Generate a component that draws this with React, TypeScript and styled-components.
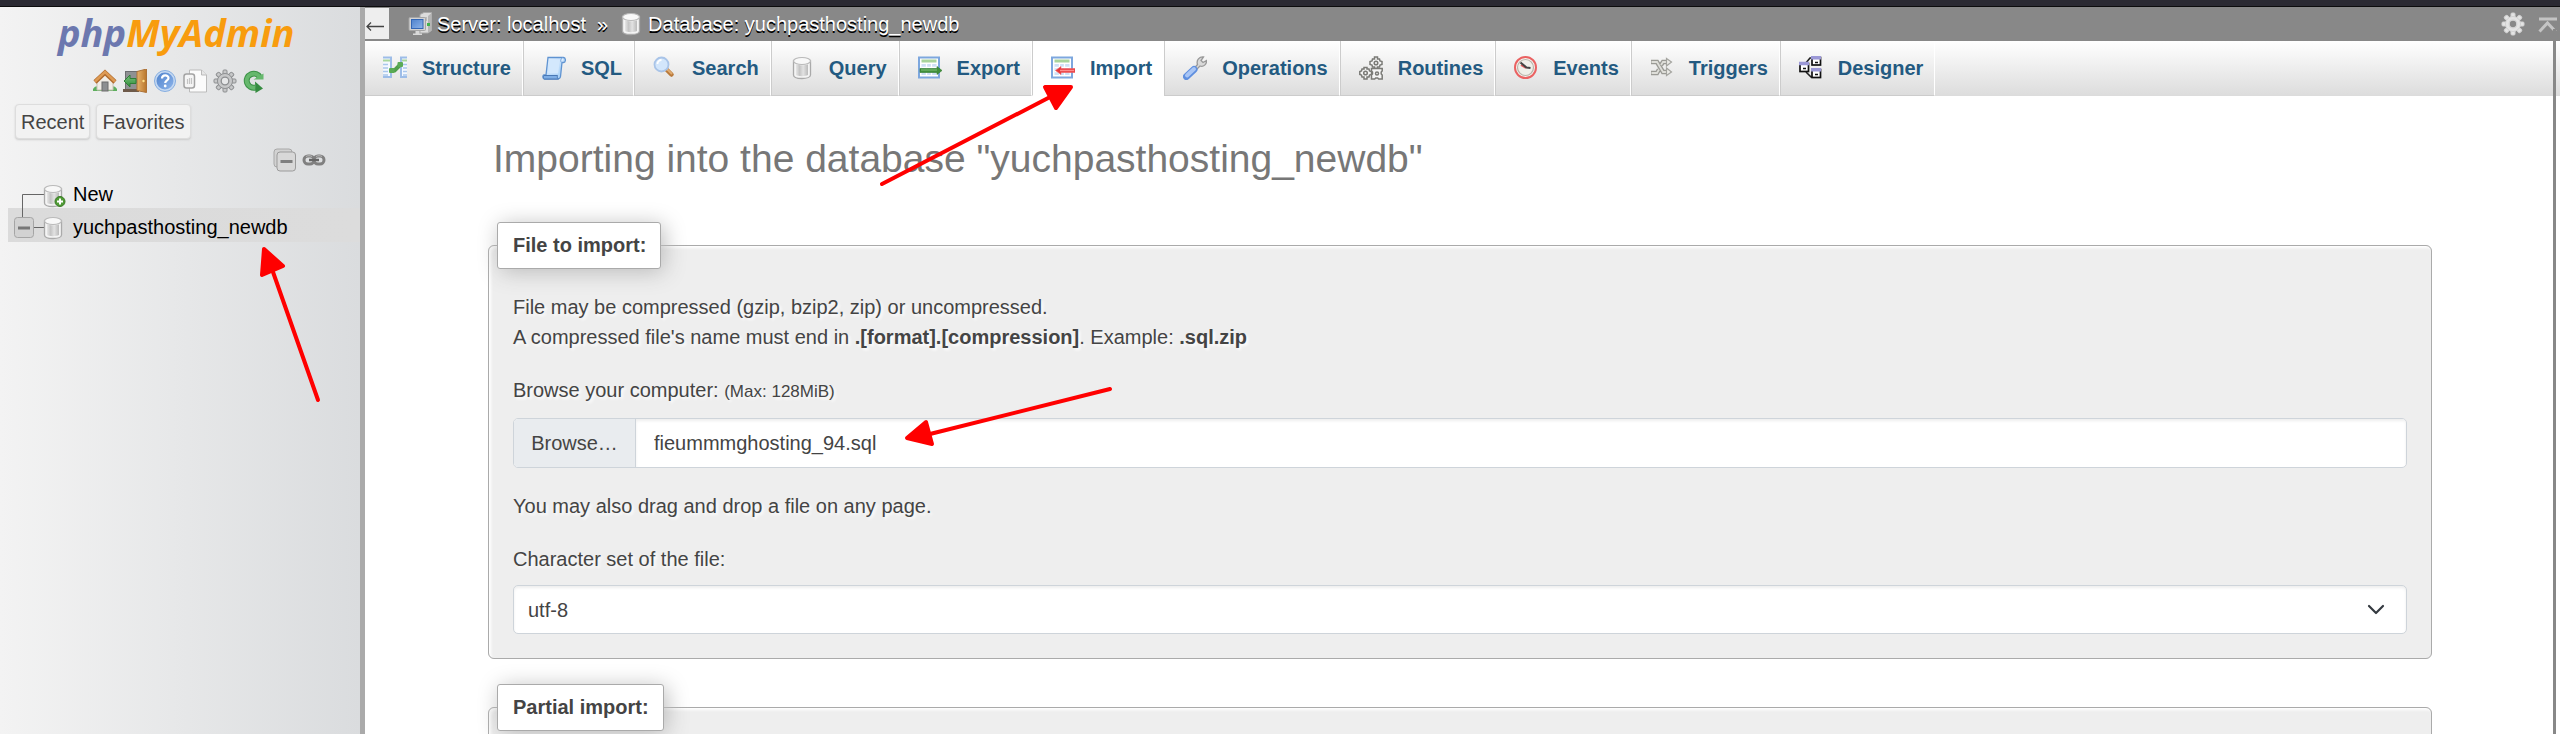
import React, { useRef, useState } from "react";
import styled, { createGlobalStyle } from "styled-components";

const GlobalStyle = createGlobalStyle`
  *, *::before, *::after { box-sizing: border-box; }
  body {
    margin: 0;
    background: #fff;
    color: #444;
    font-family: "Liberation Sans", Arial, sans-serif;
    font-size: 20px;
    line-height: 30px;
  }
  a { text-decoration: none; }
`;

const Page = styled.div`
  position: relative;
  display: flex;
  flex-direction: column;
  height: 100vh;
  overflow: hidden;
`;

const WindowEdge = styled.div`
  flex: none;
  height: 7px;
  background: #2b2a33;
  border-bottom: 1px solid #0c0c0d;
`;

const Columns = styled.div`
  display: flex;
  flex: 1;
  min-height: 0;
`;

/* ---------- navigation panel ---------- */

const Sidebar = styled.nav`
  flex: none;
  width: 365px;
  border-right: 5px solid #aaa;
  background: linear-gradient(to right, #f3f3f3, #dadcde);
`;

const Logo = styled.a`
  display: block;
  height: 62px;
  padding: 1px 0 0 58px;
  font: italic 700 38px/48px "Open Sans", sans-serif;
  color: #6c78af;
`;

const LogoAccent = styled.span`
  color: #f89c0e;
`;

const IconRow = styled.div`
  display: flex;
  gap: 6px;
  height: 24px;
  padding-left: 93px;
`;

const IconLink = styled.a`
  display: block;
  width: 24px;
  height: 24px;
`;

const Svg = styled.svg`
  display: block;
  flex: none;
  width: 24px;
  height: 24px;
`;

const QuickButtons = styled.div`
  display: flex;
  gap: 6px;
  padding: 11px 15px 0;
`;

const QuickButton = styled.button`
  height: 35px;
  padding: 0 5px;
  border: 1px solid #ddd;
  border-radius: 4px;
  background: #f2f2f2;
  box-shadow: 0 1px 2px #ccc;
  color: #444;
  font: inherit;
  line-height: 32px;
`;

const TreeTools = styled.div`
  display: flex;
  gap: 5px;
  height: 36px;
  margin-top: 9px;
  padding-left: 273px;
`;

const Tree = styled.ul`
  margin: 0;
  padding: 0 0 0 8px;
  list-style: none;
`;

const TreeItem = styled.li<{ $selected?: boolean }>`
  display: flex;
  height: ${(p) => (p.$selected ? 34 : 24)}px;
  background: ${(p) => (p.$selected ? "linear-gradient(to right, #dbdbdb, #dcdcdc)" : "none")};
`;

const TreeSvg = styled.svg`
  display: block;
  flex: none;
  width: 65px;
  height: 34px;
`;

const TreeLink = styled.a<{ $first?: boolean }>`
  color: #000;
  line-height: ${(p) => (p.$first ? 20 : 38)}px;
`;

/* ---------- top bar and tabs ---------- */

const Main = styled.main`
  flex: 1;
  min-width: 0;
  background: #fff;
`;

const TopBar = styled.header`
  display: flex;
  align-items: center;
  height: 34px;
  padding-right: 1px;
  background: #888;
`;

const BackButton = styled.button`
  width: 24px;
  height: 31px;
  margin: 0 19px 2px 0;
  padding: 0;
  border: 0;
  background: #eee;
`;

const Crumb = styled.a`
  display: flex;
  align-items: center;
  gap: 5px;
  color: #fff;
  text-shadow: 0 2px 0 #000;
`;

const CrumbDivider = styled.span`
  margin: 0 11px;
  color: #fff;
  text-shadow: 0 2px 0 #000;
`;

const BarTools = styled.div`
  display: flex;
  gap: 10px;
  margin-left: auto;
`;

const TabBar = styled.ul`
  display: flex;
  height: 55px;
  margin: 0;
  padding: 0;
  list-style: none;
  background: linear-gradient(#fff, #dcdcdc);
`;

const Tab = styled.li<{ $active?: boolean; $first?: boolean }>`
  display: flex;
  border-left: ${(p) => (p.$first ? 0 : 1)}px solid #ccc;
  border-right: 1px solid #fff;
  border-bottom: 1px solid ${(p) => (p.$active ? "#fff" : "#ccc")};
  background: ${(p) => (p.$active ? "#fff" : "none")};
`;

const TabLink = styled.a`
  display: flex;
  align-items: center;
  gap: 15px;
  padding: 0 11px 0 18px;
  color: #235a81;
  font-weight: bold;
`;

/* ---------- import form ---------- */

const Content = styled.div`
  padding: 39px 128px 0 123px;
`;

const Title = styled.h2`
  margin: 0 0 39px 5px;
  color: #777;
  font-size: 39px;
  font-weight: normal;
  line-height: 48px;
`;

const FieldSet = styled.fieldset`
  min-width: 0;
  margin: 0 0 25px;
  padding: 23px 24px 24px;
  border: 1px solid #aaa;
  border-radius: 6px;
  background: #eee;
  box-shadow: inset 2px 2px 3px #fff;
  text-shadow: 2px 2px 3px #fff;
`;

const Legend = styled.legend`
  margin-left: -16px;
  padding: 7px 14px 8px 15px;
  border: 1px solid #aaa;
  border-radius: 3px;
  background: #fff;
  box-shadow: 3px 3px 22px #bbb;
  color: #444;
  font-weight: bold;
`;

const Hint = styled.p`
  margin: 0 0 23px;
`;

const FieldLabel = styled.label`
  display: block;
  margin-bottom: 11px;
`;

const Limit = styled.small`
  font-size: 17px;
`;

const FilePicker = styled.div`
  display: flex;
  height: 50px;
  margin-bottom: 23px;
  overflow: hidden;
  border: 1px solid #ced4da;
  border-radius: 5px;
  background: #fff;
`;

const BrowseButton = styled.button`
  flex: none;
  width: 122px;
  padding: 0;
  border: 0;
  border-right: 1px solid #ced4da;
  background: #e9ecef;
  color: #444;
  font: inherit;
`;

const FileName = styled.input`
  flex: 1;
  min-width: 0;
  padding: 0 18px;
  border: 0;
  outline: 0;
  background: transparent;
  box-shadow: inset 0 2px 3px #eee;
  color: #444;
  font: inherit;
`;

const SelectBox = styled.div`
  position: relative;
`;

const Select = styled.select`
  display: block;
  width: 100%;
  height: 49px;
  padding: 0 14px;
  appearance: none;
  border: 1px solid #ced4da;
  border-radius: 5px;
  background: #fff;
  box-shadow: inset 0 2px 3px #eee;
  color: #444;
  font: inherit;
`;

const Chevron = styled.svg`
  position: absolute;
  top: 16px;
  right: 22px;
  width: 18px;
  height: 18px;
  pointer-events: none;
`;

/* ---------- things lying over the page ---------- */

const PageRule = styled.div`
  position: absolute;
  top: 29px;
  right: 4px;
  bottom: 0;
  width: 3px;
  background: #888;
`;

const Arrows = styled.svg`
  position: absolute;
  top: 0;
  left: 0;
  width: 1200px;
  height: 500px;
  pointer-events: none;
`;

/* ---------- icons ---------- */

const HiddenSvg = styled.svg`
  position: absolute;
  width: 0;
  height: 0;
`;

const Gradients = () => (
  <HiddenSvg aria-hidden="true">
    <defs>
      <linearGradient id="silver" x1="0" x2="1" y1="0" y2="0">
        <stop offset="0" stopColor="#e6e6e6" />
        <stop offset="0.3" stopColor="#c4c4c4" />
        <stop offset="0.6" stopColor="#e2e2e2" />
        <stop offset="1" stopColor="#bababa" />
      </linearGradient>
      <linearGradient id="sky" x1="0" x2="1" y1="0" y2="1">
        <stop offset="0" stopColor="#e8f3ff" />
        <stop offset="1" stopColor="#9ecbf6" />
      </linearGradient>
      <linearGradient id="wood" x1="0" x2="1" y1="0" y2="0">
        <stop offset="0" stopColor="#e8b36a" />
        <stop offset="1" stopColor="#b8752c" />
      </linearGradient>
      <linearGradient id="leaf" x1="0" x2="0" y1="0" y2="1">
        <stop offset="0" stopColor="#7cc47e" />
        <stop offset="1" stopColor="#2e8b3a" />
      </linearGradient>
      <linearGradient id="screen" x1="0" x2="1" y1="0" y2="1">
        <stop offset="0" stopColor="#4f82cc" />
        <stop offset="1" stopColor="#8db4ea" />
      </linearGradient>
    </defs>
  </HiddenSvg>
);

const Cylinder = () => (
  <g>
    <path d="M3.500 5v14c0 2 3.500 3.500 8.500 3.500s8.500-1.500 8.500-3.500V5z" fill="#f4f4f4" stroke="#aaa" strokeWidth="1.300" />
    <path d="M6 8.500v10.500c2 1.500 9.500 1.500 12 0V8.500c-3 1-9 1-12 0z" fill="url(#silver)" />
    <ellipse cx="12" cy="5" rx="8.500" ry="3.500" fill="#f8f8f8" stroke="#b9b9b9" strokeWidth="1.200" />
  </g>
);

const gearTeeth = [0, 45, 90, 135, 180, 225, 270, 315];

const Gear = ({ fill, edge, hole }: { fill: string; edge: string; hole: string }) => (
  <g>
    {gearTeeth.map((a) => (
      <rect key={a} x="10" y="1" width="4" height="6" rx="1" fill={fill} stroke={edge} transform={`rotate(${a} 12 12)`} />
    ))}
    <circle cx="12" cy="12" r="7.500" fill={fill} stroke={edge} />
    <circle cx="12" cy="12" r="6.500" fill={fill} />
    <circle cx="12" cy="12" r="3.800" fill={hole} stroke={edge} strokeWidth="1.300" />
  </g>
);

const SheetIcon = () => (
  <g>
    <rect x="1" y="1.500" width="20" height="20" fill="#fff" stroke="#7da7de" strokeWidth="2" />
    <rect x="3.500" y="3.500" width="15" height="3" fill="#a9d49b" />
    <rect x="3.500" y="8" width="15" height="11" fill="#cfe0f5" />
    <path d="M3.500 11.500h15M3.500 15.500h15M8.500 8v11M13.500 8v11" stroke="#fff" strokeWidth="1.300" />
  </g>
);

const icons: Record<string, React.ReactNode> = {
  home: (
    <>
      <path d="M0 20c3-4 6-3 7 0h10c1-3 4-4 7 0v2H0z" fill="#5daf5e" />
      <path d="M4 12l8-7 8 7v9H4z" fill="#f1ede6" stroke="#c9c2b6" />
      <rect x="9" y="13" width="6" height="9" fill="#8d8f91" stroke="#6d6d6d" />
      <path d="M2 13L12 3.500 22 13" fill="none" stroke="#b06a2c" strokeWidth="4.500" />
      <path d="M2 12.500L12 3l10 9.500" fill="none" stroke="#dd9a53" strokeWidth="2.500" />
    </>
  ),
  exit: (
    <>
      <rect x="2.500" y="2.500" width="14" height="19" fill="#8f9193" stroke="#6c6e70" />
      <path d="M0 20h16v3H0z" fill="#6e5a4a" />
      <path d="M14 2.500L23.500 0v23.500L14 21.500z" fill="url(#wood)" stroke="#ad7136" />
      <circle cx="20.500" cy="12" r="1.200" fill="#ffe18a" />
      <path d="M1 12l6-6v3.500h6v5H7V18z" fill="url(#leaf)" stroke="#2f7f37" />
    </>
  ),
  help: (
    <>
      <circle cx="12" cy="12" r="10.500" fill="#c5d9f2" stroke="#86aee0" />
      <circle cx="12" cy="12" r="8.500" fill="url(#screen)" />
      <path d="M9 9.500c0-4 6.500-4 6.500-.500 0 2.500-3.300 2.200-3.300 5" fill="none" stroke="#fff" strokeWidth="2.200" />
      <circle cx="12.200" cy="17" r="1.400" fill="#fff" />
    </>
  ),
  docs: (
    <>
      <path d="M6.500 1h12l5 5v17h-17z" fill="#fbfbfb" stroke="#bbb" />
      <path d="M18.500 1v5h5" fill="#e6e6e6" stroke="#bbb" />
      <rect x="1" y="5" width="10.500" height="14" rx="2.500" fill="#f5f5f5" stroke="#a3a3a3" strokeWidth="1.500" />
      <path d="M4.500 10v5M6.500 9v6M8.500 9v6" stroke="#c4c4c4" strokeWidth="1.200" />
    </>
  ),
  gear: <Gear fill="#c6c7c8" edge="#8d8f91" hole="#e6e7e8" />,
  whiteGear: <Gear fill="#e4e4e4" edge="#d2d2d2" hole="#888" />,
  reload: (
    <>
      <path d="M17 8.500A7 7 0 1 0 12.500 18.500" fill="none" stroke="#3d9348" strokeWidth="6" />
      <path d="M17 8.500A7 7 0 1 0 12.500 18.500" fill="none" stroke="#66b86d" strokeWidth="4" />
      <path d="M10.500 10.500h10v-6z" fill="#66b86d" />
      <path d="M12 12.500l8 7-7.500 4.500z" fill="#358c40" />
    </>
  ),
  stack: (
    <>
      <rect x="1" y="1" width="18" height="18" rx="3" fill="#d2d2d2" stroke="#a8a8a8" />
      <rect x="4" y="4" width="18.500" height="19" rx="3" fill="#d8d8d8" stroke="#9b9b9b" />
      <rect x="7.500" y="12" width="12" height="3" fill="#7f7f7f" />
    </>
  ),
  link: (
    <>
      <rect x="2" y="8" width="10" height="8" rx="4" fill="none" stroke="#808080" strokeWidth="3" />
      <rect x="12" y="8" width="10" height="8" rx="4" fill="none" stroke="#808080" strokeWidth="3" />
      <path d="M7 12h10" stroke="#666" strokeWidth="2.500" />
      <path d="M4 8.500c1-1 5-1 6 0M14 8.500c1-1 5-1 6 0" fill="none" stroke="#bbb" />
    </>
  ),
  server: (
    <>
      <path d="M12 2.500L16 .500h7.500v18L20 21h-8z" fill="#dcdcdc" stroke="#a8a8a8" />
      <path d="M20 4l3.500-3v17.500L20 21z" fill="#b5b5b5" />
      <path d="M14 6h5M14 8h5" stroke="#999" />
      <rect x="19" y="11" width="3" height="3" fill="#3fb24c" />
      <rect x="1" y="5.500" width="16.500" height="13" rx="1" fill="#d2d2d2" stroke="#a5a5a5" />
      <rect x="3.500" y="7.500" width="11.500" height="9" fill="url(#screen)" stroke="#3467b5" />
      <path d="M7.500 19h4v2.500H14V23H5v-1.500h2.500z" fill="#d9d9d9" />
    </>
  ),
  database: <Cylinder />,
  structure: (
    <>
      <path d="M0 1.500h8V21H0" fill="#f4f8fe" stroke="#9dbde8" strokeWidth="2" />
      <path d="M24 1.500h-6V21h6" fill="#f4f8fe" stroke="#9dbde8" strokeWidth="2" />
      <path d="M0 4.500h7M19 4.500h5" stroke="#a7d69c" strokeWidth="2" />
      <path d="M0 8.500h5M0 12h5M0 15.500h5M0 19h5M20 8.500h4M20 12h4M20 15.500h4M20 19h4" stroke="#a9c6ec" strokeWidth="1.500" />
      <path d="M8 14.500h3.500l5.500-5.500h1" fill="none" stroke="#519f4c" strokeWidth="4" strokeLinejoin="round" />
      <rect x="6" y="12" width="5.500" height="5" rx="1" fill="#5aab55" />
      <rect x="14.500" y="6" width="5.500" height="5" rx="1" fill="#5aab55" />
    </>
  ),
  sql: (
    <>
      <path d="M6 1.500h15.500c2.500 0 2.500 5 0 5H20l-1.500 14c-.300 2-1.200 2.500-3 2.500H2.500C.500 23 .500 19 2 19h2z" fill="url(#sky)" stroke="#5f93d1" strokeWidth="1.300" />
      <path d="M20 6.500c-1.800-.500-1.500-4 1-5" fill="#f3f9ff" stroke="#6b9edb" />
      <path d="M2 19.500h13.500c-.500 1.800 0 3 1 3.500H2.500c-1.300-.500-1.500-2.500-.500-3.500z" fill="#7eaee6" stroke="#4a78b5" />
      <path d="M7.500 3.500h10.500l-1.800 14H5.800z" fill="#d3e8fd" />
    </>
  ),
  search: (
    <>
      <path d="M14 14l4.500 4.500" stroke="#b97a3c" strokeWidth="4.500" strokeLinecap="round" />
      <path d="M14.500 13.500l4 4" stroke="#e0ab70" strokeWidth="2" strokeLinecap="round" />
      <circle cx="8.500" cy="8.500" r="7" fill="#d3e6fb" stroke="#a9c4e8" strokeWidth="1.800" />
      <path d="M4.500 8c0-2.500 2-4 4-4" fill="none" stroke="#fff" strokeWidth="1.800" />
    </>
  ),
  query: <Cylinder />,
  export: (
    <>
      <SheetIcon />
      <path d="M2 12.500h17V10.500l5 4-5 4v-2H2z" fill="#3f8f3b" stroke="#2f7a2e" strokeWidth=".600" />
      <path d="M3 14h16" stroke="#83c27b" />
    </>
  ),
  import: (
    <>
      <SheetIcon />
      <path d="M24 12.500H10V10.500l-5.500 4 5.500 4v-2H24z" fill="#e8393c" stroke="#f16264" strokeWidth=".600" />
      <path d="M9 14.500h14" stroke="#ff8d8d" strokeWidth="1.500" />
    </>
  ),
  operations: (
    <>
      <path d="M11 12.500l3.500-4C13 4 16.500 .500 20.500 1L18 4.500l2 2L23.500 4.500C24 8 20.500 11.500 17 10l-4.500 4.500z" fill="#d9d9d9" stroke="#999" strokeWidth="1.300" />
      <path d="M3.500 20.500l7.500-7" stroke="#5f8fdf" strokeWidth="7" strokeLinecap="round" />
      <path d="M4 19.500l7-6.500" stroke="#a8c5f5" strokeWidth="4" strokeLinecap="round" />
    </>
  ),
  routines: (
    <g fill="#f4f4f4" stroke="#7a7a76" strokeWidth="1.500">
      <path d="M15.500 1h3v2h2l.500 2 2 .500v3l-2 .500-.500 2h-2v1.500h-3V11h-2l-.500-2-2-.500v-3l2-.500.500-2h2z" />
      <path d="M5 11.500h3V13h2l.500 2 2 .500v3l-2 .500-.500 2H8v2H5v-2H3l-.500-2L.800 18.500v-3l1.700-.500.500-2h2z" />
      <path d="M12.500 12.500h10.700v2.500l-1 1v2l1 1v4h-3.500l-1-1h-2l-1 1h-3.200v-4l1-1v-2l-1-1z" />
      <circle cx="17" cy="7" r="1.800" />
      <circle cx="6.500" cy="17" r="1.800" />
      <circle cx="18" cy="17.500" r="1.500" />
    </g>
  ),
  events: (
    <>
      <circle cx="11.500" cy="11.500" r="10.500" fill="#f4f4f0" stroke="#ea6262" strokeWidth="2" />
      <circle cx="11.500" cy="11.500" r="8" fill="#efefe9" stroke="#b9b3a9" strokeWidth="1.200" />
      <path d="M7 9l5 3" stroke="#e05a5a" strokeWidth="2" />
      <path d="M6.500 6.500l6 5 4 .500" fill="none" stroke="#444" strokeWidth="2" />
    </>
  ),
  triggers: (
    <>
      <path d="M1 6h6l6 10h5M1 17h6l2-3.500M11 9l2-3h5" fill="none" stroke="#9a9a95" strokeWidth="4.500" />
      <path d="M1.500 6h5.500l6 10h5M1.500 17h5.500l2-3.500M11 9l2-3h5" fill="none" stroke="#deded9" strokeWidth="1.800" />
      <path d="M16.500 2.500l5 3.500-5 4zM16.500 12l5 4-5 3.500z" fill="#ecece8" stroke="#a4a49f" strokeWidth="1.200" />
    </>
  ),
  designer: (
    <>
      <path d="M6 8l5-6h3M7 16l5 5h2" fill="none" stroke="#222" strokeWidth="1.600" />
      <g fill="#fff" stroke="#111" strokeWidth="1.700">
        <rect x="1" y="7.500" width="8.500" height="8" />
        <rect x="13" y="1.500" width="8.500" height="7.500" />
        <rect x="13" y="13.500" width="8.500" height="8" />
      </g>
      <path d="M0 7.500h10M12 1.800h10M12 13.800h10" stroke="#9b98d6" strokeWidth="3.500" />
      <path d="M4 12.500h3M16 6.500h3M16 18.500h3" stroke="#111" strokeWidth="1.700" />
    </>
  ),
  top: (
    <path d="M4 7h18M4.500 19.500L12.500 11l8 8.500" fill="none" stroke="#c4c4c4" strokeWidth="3" />
  ),
};

const Icon = ({ name }: { name: string }) => (
  <Svg viewBox="0 0 24 24" aria-hidden="true">
    {icons[name]}
  </Svg>
);

const shortcuts = [
  { icon: "home", label: "Home" },
  { icon: "exit", label: "Log out" },
  { icon: "help", label: "phpMyAdmin documentation" },
  { icon: "docs", label: "MySQL documentation" },
  { icon: "gear", label: "Navigation panel settings" },
  { icon: "reload", label: "Reload navigation panel" },
];

const tabs = [
  "Structure",
  "SQL",
  "Search",
  "Query",
  "Export",
  "Import",
  "Operations",
  "Routines",
  "Events",
  "Triggers",
  "Designer",
];

const Navigation = () => (
  <Sidebar>
    <Logo href="#home">
      php<LogoAccent>MyAdmin</LogoAccent>
    </Logo>
    <IconRow>
      {shortcuts.map((s) => (
        <IconLink key={s.icon} href={`#${s.icon}`} aria-label={s.label}>
          <Icon name={s.icon} />
        </IconLink>
      ))}
    </IconRow>
    <QuickButtons>
      <QuickButton type="button">Recent</QuickButton>
      <QuickButton type="button">Favorites</QuickButton>
    </QuickButtons>
    <TreeTools>
      <IconLink href="#collapse" aria-label="Collapse all">
        <Icon name="stack" />
      </IconLink>
      <IconLink href="#link" aria-label="Unlink from main panel">
        <Icon name="link" />
      </IconLink>
    </TreeTools>
    <Tree>
      <TreeItem>
        <TreeSvg viewBox="0 0 65 34" aria-hidden="true">
          <path d="M36 10.500H14.500V34" fill="none" stroke="#666" />
          <g transform="translate(33 0)">
            <Cylinder />
            <circle cx="19" cy="17.500" r="5" fill="#4f9a35" stroke="#3a7b26" />
            <path d="M16 17.500h6M19 14.500v6" stroke="#fff" strokeWidth="2" />
          </g>
        </TreeSvg>
        <TreeLink href="#new" $first>
          New
        </TreeLink>
      </TreeItem>
      <TreeItem $selected>
        <TreeSvg viewBox="0 0 65 34" aria-hidden="true">
          <path d="M14.500 0v10M26 19.500h10" stroke="#666" />
          <rect x="6.500" y="9.500" width="19" height="20" rx="3" fill="#d2d2d2" stroke="#a5a5a5" />
          <path d="M10 20h12" stroke="#777" strokeWidth="3" />
          <g transform="translate(33 8)">
            <Cylinder />
          </g>
        </TreeSvg>
        <TreeLink href="#database">yuchpasthosting_newdb</TreeLink>
      </TreeItem>
    </Tree>
  </Sidebar>
);

const ImportForm = () => {
  const picker = useRef<HTMLInputElement>(null);
  const [file, setFile] = useState("fieummmghosting_94.sql");
  return (
    <Content>
      <Title>Importing into the database "yuchpasthosting_newdb"</Title>
      <FieldSet>
        <Legend>File to import:</Legend>
        <Hint>
          File may be compressed (gzip, bzip2, zip) or uncompressed.
          <br />
          A compressed file's name must end in <b>.[format].[compression]</b>. Example: <b>.sql.zip</b>
        </Hint>
        <FieldLabel htmlFor="file-name">
          Browse your computer: <Limit>(Max: 128MiB)</Limit>
        </FieldLabel>
        <FilePicker>
          <BrowseButton type="button" onClick={() => picker.current?.click()}>
            Browse…
          </BrowseButton>
          <FileName id="file-name" type="text" readOnly value={file} />
          <input
            ref={picker}
            type="file"
            hidden
            aria-label="File"
            onChange={(e) => setFile(e.target.files?.[0]?.name ?? file)}
          />
        </FilePicker>
        <Hint>You may also drag and drop a file on any page.</Hint>
        <FieldLabel htmlFor="charset">Character set of the file:</FieldLabel>
        <SelectBox>
          <Select id="charset" defaultValue="utf-8">
            <option>utf-8</option>
          </Select>
          <Chevron viewBox="0 0 18 18" aria-hidden="true">
            <path d="M2 5l7 7 7-7" fill="none" stroke="#343a40" strokeWidth="2.200" strokeLinecap="round" strokeLinejoin="round" />
          </Chevron>
        </SelectBox>
      </FieldSet>
      <FieldSet>
        <Legend>Partial import:</Legend>
      </FieldSet>
    </Content>
  );
};

export default function App() {
  return (
    <Page>
      <GlobalStyle />
      <Gradients />
      <WindowEdge />
      <Columns>
        <Navigation />
        <Main>
          <TopBar>
            <BackButton type="button" aria-label="Hide panel">
              <svg width="24" height="31" viewBox="0 0 24 31" aria-hidden="true">
                <path d="M19 18.500H2M6 14.500l-4 4 4 4" fill="none" stroke="#444" strokeWidth="1.300" />
              </svg>
            </BackButton>
            <Crumb href="#server">
              <Icon name="server" />
              Server: localhost
            </Crumb>
            <CrumbDivider>»</CrumbDivider>
            <Crumb href="#database">
              <Icon name="database" />
              Database: yuchpasthosting_newdb
            </Crumb>
            <BarTools>
              <IconLink href="#settings" aria-label="Page-related settings">
                <Icon name="whiteGear" />
              </IconLink>
              <IconLink href="#top" aria-label="Back to top">
                <Icon name="top" />
              </IconLink>
            </BarTools>
          </TopBar>
          <TabBar>
            {tabs.map((name, i) => (
              <Tab key={name} $first={i === 0} $active={name === "Import"}>
                <TabLink href={`#${name.toLowerCase()}`}>
                  <Icon name={name.toLowerCase()} />
                  {name}
                </TabLink>
              </Tab>
            ))}
          </TabBar>
          <ImportForm />
        </Main>
      </Columns>
      <PageRule />
      <Arrows viewBox="0 0 1200 500" aria-hidden="true">
        <g stroke="#f00" strokeWidth="4" strokeLinecap="round" strokeLinejoin="round" fill="#f00">
          <path d="M882 184L1052 96" />
          <path d="M1045 87h26l-15 21z" />
          <path d="M318 400L273 272" />
          <path d="M264 249l19 17-21 9z" />
          <path d="M1110 389L930 434" />
          <path d="M907 438l19-16 6 22z" />
        </g>
      </Arrows>
    </Page>
  );
}
